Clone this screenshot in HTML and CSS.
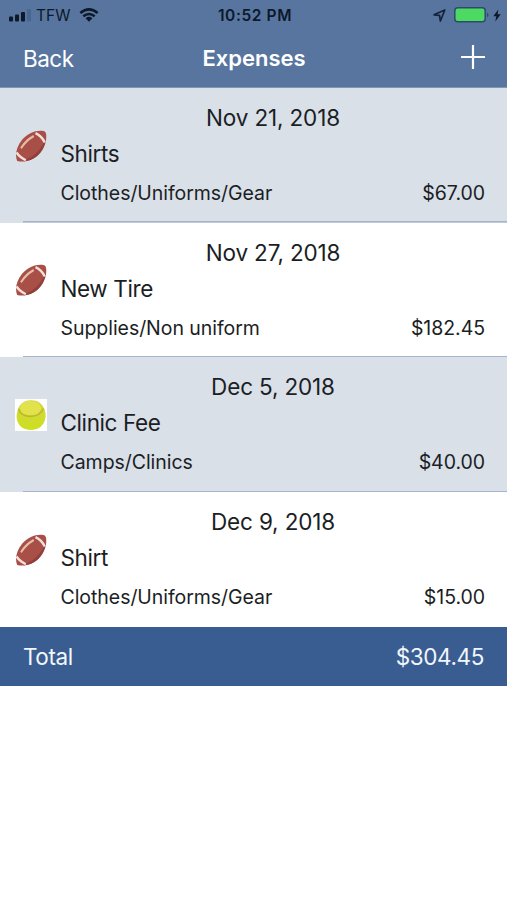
FILE: index.html
```html
<!DOCTYPE html>
<html lang="en">
<head>
<meta charset="utf-8">
<title>Expenses</title>
<link rel="stylesheet" href="styles.css">
</head>
<body>
<svg class="defs" aria-hidden="true">
  <symbol id="football" viewBox="0 0 32 32">
    <path d="M2.200 31C-.2 25.500 1 17 7.300 9.500 13.500 2.500 21.500-.2 28.500 1 30.500 1.500 31 3 31.200 5 31.700 11.500 29.500 18.500 24 24.300 18 30.500 9.500 32.800 2.200 31Z" fill="#a84f47"/>
    <path d="M9 29.800C17 28.500 26.500 20 30.500 9 30 16 26.500 22 22 26 18.500 29 13.500 31 9 31.300Z" fill="#8f403c"/>
    <path d="M20.500 3.200Q26.500 6 29.800 12.500M1.500 22.500Q4.500 27 10.800 30.200" fill="none" stroke="#f5dfdc" stroke-width="2.400"/>
    <path d="M6.500 17.500Q11 10.500 18 6.500" fill="none" stroke="#e6bea8" stroke-width="2.200" stroke-linecap="round"/>
  </symbol>
</svg>
<header class="header">
  <div class="status">
    <div class="carrier">
      <svg width="22" height="14" viewBox="0 0 22 14"><g fill="#0c1929"><rect y="8.500" width="4" height="5" rx="1"/><rect x="6" y="6.500" width="4" height="7" rx="1"/><rect x="12" y="4" width="4" height="9.500" rx="1"/></g><rect x="18" y="1" width="4" height="12.500" rx="1" fill="#48678f"/></svg>
      <span>TFW</span>
      <svg class="wifi" width="20" height="14" viewBox="0 0 20 14"><path d="M1.300 5Q10-2.300 18.700 5M4.300 8.300Q10 3.700 15.700 8.300" fill="none" stroke="#0c1929" stroke-width="2.500"/><path d="M6.600 10.200Q10 7.400 13.400 10.200L10 13.700Z" fill="#0c1929"/></svg>
    </div>
    <div class="clock">10:52 PM</div>
    <div class="power">
      <svg width="13" height="13" viewBox="0 0 13 13"><path d="M1 5.800 11.800 1 7.400 12 6.500 6.400Z" fill="none" stroke="#14243a" stroke-width="1.700" stroke-linejoin="round"/></svg>
      <svg width="36" height="16" viewBox="0 0 36 16"><rect x=".8" y=".8" width="30.400" height="14" rx="3" fill="#4cda63" stroke="#2e4b6c" stroke-width="1.500"/><path d="M33 5.500Q36 8 33 10.500Z" fill="#2e4b6c"/></svg>
      <svg width="8" height="13" viewBox="0 0 8 13"><path d="M5.300.5.300 7.200H3.300L2.300 12.500 7.700 5.200H4.600Z" fill="#0c1929"/></svg>
    </div>
  </div>
  <nav class="nav">
    <span class="back">Back</span>
    <h1>Expenses</h1>
    <svg class="add" width="24" height="24" viewBox="0 0 24 24"><path d="M12 0V24M0 12H24" stroke="#fff" stroke-width="2.200"/></svg>
  </nav>
</header>
<main>
  <section class="row shaded">
    <svg class="icon"><use href="#football"/></svg>
    <div class="body">
      <div class="date">Nov 21, 2018</div>
      <div class="name">Shirts</div>
      <div class="detail"><span>Clothes/Uniforms/Gear</span><span>$67.00</span></div>
    </div>
  </section>
  <section class="row">
    <svg class="icon"><use href="#football"/></svg>
    <div class="body">
      <div class="date">Nov 27, 2018</div>
      <div class="name">New Tire</div>
      <div class="detail"><span>Supplies/Non uniform</span><span>$182.45</span></div>
    </div>
  </section>
  <section class="row shaded">
    <svg class="icon" viewBox="0 0 32 32">
      <defs>
        <linearGradient id="ball" x2="0" y2="1"><stop stop-color="#d3d540"/><stop offset="1" stop-color="#cde020"/></linearGradient>
      </defs>
      <path d="M0 0H32V32H0Z" fill="#fff"/>
      <path d="M15.500 1.200C24 1 28.500 6 30 12 32 19 29 26 24 29 19 31.700 11 31.500 7 28.500 2 25 .5 18 2.500 12 4 5 9 1.500 15.500 1.200Z" fill="url(#ball)"/>
      <path d="M5 9C6 4 10 2 15.500 2S25 4 26 9C26 14 21 16.500 15.500 16.500S5 14 5 9Z" fill="#e2e24d"/>
      <path d="M3.500 10Q6 17.300 15.500 17.300T28.500 9.500" fill="none" stroke="#bdbb2c" stroke-width="1.800"/>
    </svg>
    <div class="body">
      <div class="date">Dec 5, 2018</div>
      <div class="name">Clinic Fee</div>
      <div class="detail"><span>Camps/Clinics</span><span>$40.00</span></div>
    </div>
  </section>
  <section class="row">
    <svg class="icon"><use href="#football"/></svg>
    <div class="body">
      <div class="date">Dec 9, 2018</div>
      <div class="name">Shirt</div>
      <div class="detail"><span>Clothes/Uniforms/Gear</span><span>$15.00</span></div>
    </div>
  </section>
  <footer class="total"><span>Total</span><span>$304.45</span></footer>
</main>
</body>
</html>
```
FILE: styles.css
```css
* { box-sizing: border-box; }
body {
  margin: 0;
  background: #fff;
  color: #1b1e24;
  font-family: Inter, "Liberation Sans", sans-serif;
}
svg { display: block; flex: none; }
.defs { display: none; }
.header {
  height: 88px;
  background: #5875a0;
  border-bottom: 1px solid #8197b3;
}
.status {
  display: grid;
  grid-template-columns: 1fr auto 1fr;
  align-items: center;
  height: 30px;
  padding: 0 6px 0 9px;
  color: #0c1929;
  font-size: 15.5px;
}
.carrier, .power { display: flex; align-items: center; }
.carrier { gap: 5px; }
.wifi { margin-left: 4px; }
.clock { font-size: 15.5px; font-weight: 600; letter-spacing: 0.6px; }
.power { justify-content: flex-end; gap: 3px; }
.power svg:first-child { margin-right: 5px; }
.nav {
  display: grid;
  grid-template-columns: 1fr auto 1fr;
  align-items: center;
  height: 56px;
  padding: 0 22px 0 23px;
  color: #fff;
  font-size: 22.5px;
}
.back { letter-spacing: -0.5px; }
.nav h1 { margin: 0; font-size: 22px; font-weight: 600; }
.add { justify-self: end; margin-top: -2px; }
.row {
  display: flex;
  height: 134.7px;
  padding: 0 22px 0 15px;
}
.shaded { background: #d9e0e8; }
.row:not(:last-of-type) {
  background-image: linear-gradient(#a5b3cb, #a5b3cb);
  background-size: calc(100% - 23px) 1.5px;
  background-position: right bottom;
  background-repeat: no-repeat;
}
.icon { width: 32px; height: 32px; margin: 41.5px 14px 0 0; }
.body { flex: 1; }
.date, .name { font-size: 22.5px; }
.date {
  height: 29px;
  line-height: 29px;
  margin-top: 15px;
  text-align: center;
  letter-spacing: -0.15px;
}
.name {
  height: 30px;
  line-height: 30px;
  margin: 7px 0 0 -0.5px;
  letter-spacing: -0.4px;
}
.detail {
  display: flex;
  justify-content: space-between;
  height: 28px;
  margin: 10px 0 0 -0.5px;
  line-height: 28px;
  font-size: 19.5px;
  letter-spacing: -0.05px;
}
.total {
  display: flex;
  justify-content: space-between;
  align-items: center;
  height: 59px;
  padding: 0 23px;
  background: #395d91;
  color: #f1f5fc;
  font-size: 22.5px;
  letter-spacing: -0.4px;
}
```
